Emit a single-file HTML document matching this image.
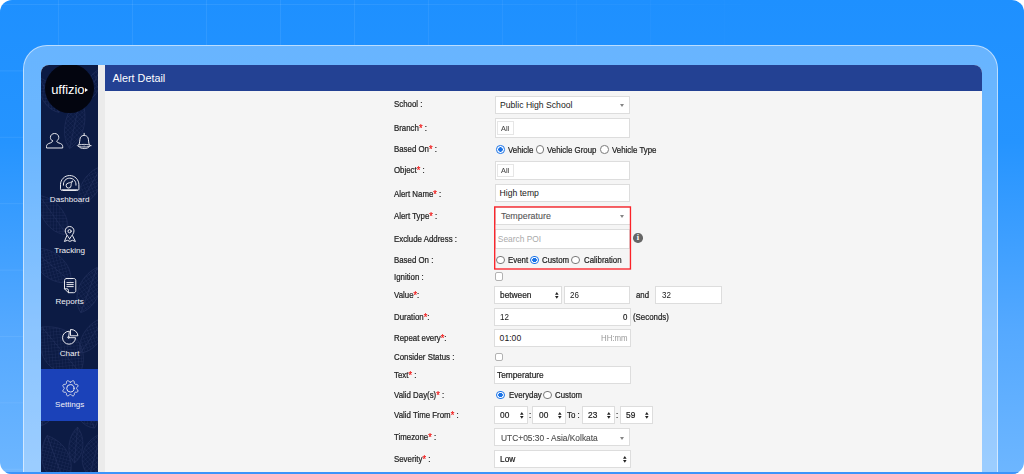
<!DOCTYPE html>
<html lang="en">
<head>
<meta charset="utf-8">
<title>Alert Detail</title>
<style>
*{box-sizing:border-box;margin:0;padding:0}
html,body{width:1024px;height:474px;overflow:hidden;background:#fff;font-family:"Liberation Sans",sans-serif}
#stage{position:absolute;left:0;top:0;width:1024px;height:474px;border-radius:12px;overflow:hidden;
 background:linear-gradient(180deg,#1e90ff 0%,#2594ff 30%,#55a9ff 70%,#6db6ff 100%)}
#grid{position:absolute;inset:0;
 background-image:linear-gradient(90deg,rgba(255,255,255,.075) 1px,transparent 1px),linear-gradient(180deg,rgba(255,255,255,.075) 1px,transparent 1px);
 background-size:74px 66.4px;background-position:58px 4px;-webkit-mask-image:linear-gradient(90deg,#000 0%,#000 35%,transparent 78%);mask-image:linear-gradient(90deg,#000 0%,#000 35%,transparent 78%)}
#bot{position:absolute;left:0;top:472px;width:1024px;height:2px;background:#3b94fb}
#frame{position:absolute;left:23.3px;top:44.6px;width:975.2px;height:460px;border-radius:24px;background:linear-gradient(rgba(255,255,255,.32),rgba(255,255,255,.32)),linear-gradient(180deg,#1e90ff 0%,#2594ff 30%,#55a9ff 70%,#6db6ff 100%) 0 0/1024px 474px fixed;border:1px solid rgba(255,255,255,.55)}
#app{position:absolute;left:41px;top:65px;width:940.5px;height:407px;border-radius:8px 8px 0 0;overflow:hidden;background:#f5f5f5}
#side{position:absolute;left:0;top:0;width:57.3px;height:407px;background:#0c1b44;overflow:hidden}
#strip{position:absolute;left:57.3px;top:0;width:6.7px;height:407px;background:#ebebeb}
#hdr{position:absolute;left:64px;top:0;right:0;height:25.8px;background:#234193}
#hdr span{position:absolute;left:7.4px;top:7px;font-size:10.8px;line-height:13px;color:#fff;white-space:nowrap}
.abs{position:absolute}
.t{position:absolute;white-space:nowrap;line-height:12px;height:12px;font-size:8.6px;transform:scaleX(.915);transform-origin:0 50%;color:#222;-webkit-text-stroke:.22px currentColor}
.lab{left:394px}
.lab i{color:#f01818;font-style:normal;font-size:10px;line-height:8px;vertical-align:-1.2px}
.box{position:absolute;background:#fff;border:1px solid #ddd}
.nav{position:absolute;left:0;width:57.3px;text-align:center;color:#f1f1f6;font-size:8.1px;line-height:10px;white-space:nowrap;margin-top:.6px}
#logo{position:absolute;left:4px;top:-.6px;width:48.8px;height:48.8px;border-radius:50%;background:#03050f}
#logo span{position:absolute;left:6.2px;top:17.8px;font-size:13px;line-height:15px;color:#fff;letter-spacing:-.07px}
#logo b{position:absolute;left:40.1px;top:24px;width:0;height:0;border-top:2.2px solid transparent;border-bottom:2.2px solid transparent;border-left:3.9px solid #fff}
#active{position:absolute;left:0;top:304px;width:57.3px;height:51.7px;background:#1b42b9}
svg{position:absolute;overflow:visible}
.ic{fill:none;stroke:#e9e9ee;stroke-width:1;stroke-linejoin:round;stroke-linecap:round}
.ar9{font-size:8.65px;color:#1a1a1a;transform:none;-webkit-text-stroke:0}
.g{color:#484848;font-size:8px;margin-top:.5px;-webkit-text-stroke:.08px}
.g2{color:#555;font-size:8.9px;transform:none;-webkit-text-stroke:.1px}
.v{font-size:9.1px}
.tz{transform:scaleX(.945);color:#4c4c4c}
.d{transform:scaleX(.93)}
.ph{color:#aaa;font-size:8.4px;transform:none;-webkit-text-stroke:0}
.ph2{color:#999;font-size:8.6px;-webkit-text-stroke:0}
.tag{border-color:#e6e6e6;background:#fff}
.rd{position:absolute;width:8.6px;height:8.6px;border-radius:50%;border:.85px solid #7a7a7a;background:#fff}
.rd.on{border:1.1px solid #1a73e8;background:radial-gradient(circle,#1a73e8 0 2px,#fff 2.5px)}
.ck{position:absolute;width:8px;height:8.2px;border-radius:2px;border:1px solid #b2b2b2;background:#fff}
.ar{position:absolute;width:0;height:0;border-left:2.5px solid transparent;border-right:2.5px solid transparent;border-top:3.4px solid #858585;margin:-.2px 0 0 -.3px}
.ud{position:absolute;width:3.6px;height:6.8px;fill:#222}
.info{position:absolute;width:9.5px;height:9.5px;border-radius:50%;background:#666;color:#fff;font-family:"Liberation Serif",serif;font-weight:bold;font-size:8.4px;line-height:9.5px;text-align:center}
.red{position:absolute;border:1.35px solid #fb2026}

</style>
</head>
<body>
<div id="stage">
 <div id="grid"></div>
 <div id="frame"></div>
 <div id="app">
  <div id="side">
<svg id="leaf" width="57.3" height="407" viewBox="0 0 57.3 407" style="left:0;top:0;opacity:.2;overflow:hidden"><defs><pattern id="hx" width="3.2" height="3.2" patternUnits="userSpaceOnUse" patternTransform="rotate(35)"><path d="M0 0H3.2M0 0V3.2" stroke="#8e96d6" stroke-width=".55" fill="none"/></pattern></defs><g transform="translate(34 58) rotate(12)"><path d="M0 -26C13.2 -10.4 12.100000000000001 15.6 0 26C-12.100000000000001 15.6 -13.2 -10.4 0 -26Z" fill="url(#hx)" stroke="#8e96d6" stroke-width=".5"/><path d="M0 -26V26" stroke="#8e96d6" stroke-width=".5"/></g><g transform="translate(8 30) rotate(-30)"><path d="M0 -20C10.799999999999999 -8.0 9.9 12.0 0 20C-9.9 12.0 -10.799999999999999 -8.0 0 -20Z" fill="url(#hx)" stroke="#8e96d6" stroke-width=".5"/><path d="M0 -20V20" stroke="#8e96d6" stroke-width=".5"/></g><g transform="translate(52 20) rotate(25)"><path d="M0 -18C9.6 -7.2 8.8 10.799999999999999 0 18C-8.8 10.799999999999999 -9.6 -7.2 0 -18Z" fill="url(#hx)" stroke="#8e96d6" stroke-width=".5"/><path d="M0 -18V18" stroke="#8e96d6" stroke-width=".5"/></g><g transform="translate(12 150) rotate(-35)"><path d="M0 -24C14.399999999999999 -9.600000000000001 13.200000000000001 14.399999999999999 0 24C-13.200000000000001 14.399999999999999 -14.399999999999999 -9.600000000000001 0 -24Z" fill="url(#hx)" stroke="#8e96d6" stroke-width=".5"/><path d="M0 -24V24" stroke="#8e96d6" stroke-width=".5"/></g><g transform="translate(50 120) rotate(30)"><path d="M0 -22C12.0 -8.8 11.0 13.2 0 22C-11.0 13.2 -12.0 -8.8 0 -22Z" fill="url(#hx)" stroke="#8e96d6" stroke-width=".5"/><path d="M0 -22V22" stroke="#8e96d6" stroke-width=".5"/></g><g transform="translate(10 200) rotate(-50)"><path d="M0 -26C16.8 -10.4 15.400000000000002 15.6 0 26C-15.400000000000002 15.6 -16.8 -10.4 0 -26Z" fill="url(#hx)" stroke="#8e96d6" stroke-width=".5"/><path d="M0 -26V26" stroke="#8e96d6" stroke-width=".5"/></g><g transform="translate(48 225) rotate(20)"><path d="M0 -24C14.399999999999999 -9.600000000000001 13.200000000000001 14.399999999999999 0 24C-13.200000000000001 14.399999999999999 -14.399999999999999 -9.600000000000001 0 -24Z" fill="url(#hx)" stroke="#8e96d6" stroke-width=".5"/><path d="M0 -24V24" stroke="#8e96d6" stroke-width=".5"/></g><g transform="translate(20 285) rotate(-40)"><path d="M0 -30C26.4 -12.0 24.200000000000003 18.0 0 30C-24.200000000000003 18.0 -26.4 -12.0 0 -30Z" fill="url(#hx)" stroke="#8e96d6" stroke-width=".5"/><path d="M0 -30V30" stroke="#8e96d6" stroke-width=".5"/></g><g transform="translate(52 270) rotate(35)"><path d="M0 -22C12.0 -8.8 11.0 13.2 0 22C-11.0 13.2 -12.0 -8.8 0 -22Z" fill="url(#hx)" stroke="#8e96d6" stroke-width=".5"/><path d="M0 -22V22" stroke="#8e96d6" stroke-width=".5"/></g><g transform="translate(8 340) rotate(20)"><path d="M0 -22C12.0 -8.8 11.0 13.2 0 22C-11.0 13.2 -12.0 -8.8 0 -22Z" fill="url(#hx)" stroke="#8e96d6" stroke-width=".5"/><path d="M0 -22V22" stroke="#8e96d6" stroke-width=".5"/></g><g transform="translate(45 345) rotate(-25)"><path d="M0 -20C14.399999999999999 -8.0 13.200000000000001 12.0 0 20C-13.200000000000001 12.0 -14.399999999999999 -8.0 0 -20Z" fill="url(#hx)" stroke="#8e96d6" stroke-width=".5"/><path d="M0 -20V20" stroke="#8e96d6" stroke-width=".5"/></g><g transform="translate(15 395) rotate(-20)"><path d="M0 -26C19.2 -10.4 17.6 15.6 0 26C-17.6 15.6 -19.2 -10.4 0 -26Z" fill="url(#hx)" stroke="#8e96d6" stroke-width=".5"/><path d="M0 -26V26" stroke="#8e96d6" stroke-width=".5"/></g><g transform="translate(54 390) rotate(15)"><path d="M0 -22C16.8 -8.8 15.400000000000002 13.2 0 22C-15.400000000000002 13.2 -16.8 -8.8 0 -22Z" fill="url(#hx)" stroke="#8e96d6" stroke-width=".5"/><path d="M0 -22V22" stroke="#8e96d6" stroke-width=".5"/></g><g transform="translate(35 380) rotate(5)"><path d="M0 -18C9.6 -7.2 8.8 10.799999999999999 0 18C-8.8 10.799999999999999 -9.6 -7.2 0 -18Z" fill="url(#hx)" stroke="#8e96d6" stroke-width=".5"/><path d="M0 -18V18" stroke="#8e96d6" stroke-width=".5"/></g></svg>
   <div id="active"></div>
   <div id="logo"><span>uffizio</span><b></b></div>
<!--icons-->
   <svg class="ic" style="left:4.8px;top:68.3px" width="17.2" height="15.6" viewBox="0 0 17.2 15.6" ><path d="M6.4 7.9C5.2 7.1 4.4 5.9 4.4 4.5C4.4 2.1 6.2.5 8.6.5C11 .5 12.8 2.1 12.8 4.5C12.8 5.9 12 7.1 10.8 7.9C10.8 9.2 11.6 9.6 13 10C15.4 10.7 16.7 11.6 16.7 13.6L16.7 15L.5 15L.5 13.6C.5 11.6 1.8 10.7 4.2 10C5.6 9.6 6.4 9.2 6.4 7.9Z"/></svg>
   <svg class="ic" style="left:35.7px;top:68.0px" width="14.4" height="16.4" viewBox="0 0 14.4 16.4" ><path d="M7.15.3V2.4M2 11.8C2.9 9.5 2.6 6.5 3.3 4.8C4 3.2 5.5 2.4 7.15 2.4C8.8 2.4 10.3 3.2 11 4.8C11.7 6.5 11.4 9.5 12.3 11.8"/><ellipse cx="7.15" cy="12.7" rx="6.8" ry="1.3" stroke-width=".9"/><path d="M2 13.8C3.3 16.3 11 16.3 12.3 13.8" stroke-width=".9"/><circle cx="7.15" cy="13.1" r=".5" fill="#e9e9ee" stroke="none"/></svg>
   <svg class="ic" style="left:19.0px;top:109.9px" width="19.4" height="16" viewBox="0 0 19.4 16" ><path d="M2.2 15.5C1 15.5 .5 14.8 .5 13.8L.5 9.7C.5 4.6 4.6.5 9.7.5C14.8.5 18.9 4.6 18.9 9.7L18.9 13.8C18.9 14.8 18.4 15.5 17.2 15.5Z"/><path d="M3.4 10.2C3.1 6 6 3.2 9.7 3.2C13.4 3.2 16.3 6 16 10.2"/><path d="M2 14.6H17.4" stroke-width=".8"/><path d="M12.5 6.2C11.3 7.8 11.1 9.1 11.1 10.6A2.5 2.5 0 1 1 8.2 8.1C9.6 7.8 11.2 7.3 12.5 6.2Z"/></svg>
   <svg class="ic" style="left:22.8px;top:161.0px" width="11.8" height="16" viewBox="0 0 11.8 16" ><path d="M5.6 12.8C3.5 9.5 1.2 7.5 1.2 4.9C1.2 2.4 3.2.5 5.6.5C8 .5 10 2.4 10 4.9C10 7.5 7.7 9.5 5.6 12.8Z"/><circle cx="5.6" cy="5.2" r="1.6"/><path d="M2.9 9.6L.4 15.5L3.4 14.3L5.9 15.4L8.4 14.3L11.4 15.5L8.5 9.6"/></svg>
   <svg class="ic" style="left:22.5px;top:212.8px" width="12.4" height="15.4" viewBox="0 0 12.4 15.4" ><path d="M2.6.5L9.7.5C11 .5 11.8 1.3 11.8 2.6L11.8 12.6C11.8 13.9 11 14.7 9.7 14.7L4.4 14.7L.5 10.8L.5 2.6C.5 1.3 1.3.5 2.6.5Z"/><path d="M.5 10.8L3 10.8C3.9 10.8 4.4 11.3 4.4 12.2L4.4 14.7"/><path d="M2.9 4.6H9.3M2.9 6.6H9.3M2.9 8.6H9.3"/></svg>
   <svg class="ic" style="left:20.6px;top:263.7px" width="16.6" height="16.2" viewBox="0 0 16.6 16.2" ><path d="M7 2.2A6.5 6.5 0 1 0 13.5 8.7L7 8.7Z"/><path d="M8.9.5A6.6 6.6 0 0 1 15.9 6.8L8.9 6.8Z"/><circle cx="6.6" cy="8.4" r=".9"/></svg>
   <svg class="ic" style="left:20.5px;top:314.7px" width="17" height="17" viewBox="0 0 17 17" ><path d="M8.40 2.15 L8.64 2.13 L8.89 2.06 L9.15 1.94 L9.44 1.75 L9.79 1.34 L10.17 0.94 L10.51 0.80 L10.85 0.75 L11.18 0.77 L11.48 0.86 L11.76 1.02 L12.00 1.23 L12.21 1.50 L12.36 1.85 L12.34 2.40 L12.30 2.94 L12.37 3.27 L12.47 3.54 L12.59 3.76 L12.75 3.95 L12.94 4.11 L13.16 4.23 L13.43 4.33 L13.76 4.40 L14.30 4.36 L14.85 4.34 L15.20 4.49 L15.47 4.70 L15.68 4.94 L15.84 5.22 L15.93 5.52 L15.95 5.85 L15.90 6.19 L15.76 6.53 L15.36 6.91 L14.95 7.26 L14.76 7.55 L14.64 7.81 L14.57 8.06 L14.55 8.30 L14.57 8.54 L14.64 8.79 L14.76 9.05 L14.95 9.34 L15.36 9.69 L15.76 10.07 L15.90 10.41 L15.95 10.75 L15.93 11.08 L15.84 11.38 L15.68 11.66 L15.47 11.90 L15.20 12.11 L14.85 12.26 L14.30 12.24 L13.76 12.20 L13.43 12.27 L13.16 12.37 L12.94 12.49 L12.75 12.65 L12.59 12.84 L12.47 13.06 L12.37 13.33 L12.30 13.66 L12.34 14.20 L12.36 14.75 L12.21 15.10 L12.00 15.37 L11.76 15.58 L11.48 15.74 L11.18 15.83 L10.85 15.85 L10.51 15.80 L10.17 15.66 L9.79 15.26 L9.44 14.85 L9.15 14.66 L8.89 14.54 L8.64 14.47 L8.40 14.45 L8.16 14.47 L7.91 14.54 L7.65 14.66 L7.36 14.85 L7.01 15.26 L6.63 15.66 L6.29 15.80 L5.95 15.85 L5.62 15.83 L5.32 15.74 L5.04 15.58 L4.80 15.37 L4.59 15.10 L4.44 14.75 L4.46 14.20 L4.50 13.66 L4.43 13.33 L4.33 13.06 L4.21 12.84 L4.05 12.65 L3.86 12.49 L3.64 12.37 L3.37 12.27 L3.04 12.20 L2.50 12.24 L1.95 12.26 L1.60 12.11 L1.33 11.90 L1.12 11.66 L0.96 11.38 L0.87 11.08 L0.85 10.75 L0.90 10.41 L1.04 10.07 L1.44 9.69 L1.85 9.34 L2.04 9.05 L2.16 8.79 L2.23 8.54 L2.25 8.30 L2.23 8.06 L2.16 7.81 L2.04 7.55 L1.85 7.26 L1.44 6.91 L1.04 6.53 L0.90 6.19 L0.85 5.85 L0.87 5.52 L0.96 5.22 L1.12 4.94 L1.33 4.70 L1.60 4.49 L1.95 4.34 L2.50 4.36 L3.04 4.40 L3.37 4.33 L3.64 4.23 L3.86 4.11 L4.05 3.95 L4.21 3.76 L4.33 3.54 L4.43 3.27 L4.50 2.94 L4.46 2.40 L4.44 1.85 L4.59 1.50 L4.80 1.23 L5.04 1.02 L5.32 0.86 L5.62 0.77 L5.95 0.75 L6.29 0.80 L6.63 0.94 L7.01 1.34 L7.36 1.75 L7.65 1.94 L7.91 2.06 L8.16 2.13Z"/><circle cx="8.4" cy="8.3" r="3.7"/></svg>
<!--/icons-->   <div class="nav" style="top:129.1px">Dashboard</div>
   <div class="nav" style="top:180.1px">Tracking</div>
   <div class="nav" style="top:231.6px">Reports</div>
   <div class="nav" style="top:283.2px">Chart</div>
   <div class="nav" style="top:334.5px">Settings</div>
  </div>
  <div id="strip"></div>
  <div id="hdr"><span>Alert Detail</span></div>
 </div>
 <div id="bot"></div>
 <div id="form">
  <div class="t lab" style="top:98.4px">School :</div>
  <div class="box " style="left:495px;top:96.4px;width:134.8px;height:17.2px"></div>
  <div class="t ar9" style="left:500px;top:98.6px;">Public High School</div>
  <div class="ar" style="left:620.6px;top:104.3px"></div>
  <div class="t lab" style="top:122.4px">Branch<i>*</i> :</div>
  <div class="box " style="left:495px;top:118.4px;width:134.8px;height:19.5px"></div>
  <div class="box tag" style="left:497.3px;top:121.3px;width:16.4px;height:13.5px"></div>
  <div class="t g" style="left:501.4px;top:122.2px;">All</div>
  <div class="t lab" style="top:143.3px">Based On<i>*</i> :</div>
  <div class="rd on" style="left:496.3px;top:145.2px"></div>
  <div class="t " style="left:508.3px;top:143.5px;">Vehicle</div>
  <div class="rd" style="left:535.5px;top:145.2px"></div>
  <div class="t " style="left:547.2px;top:143.5px;">Vehicle Group</div>
  <div class="rd" style="left:600.0px;top:145.2px"></div>
  <div class="t " style="left:611.5px;top:143.5px;">Vehicle Type</div>
  <div class="t lab" style="top:164.3px">Object<i>*</i> :</div>
  <div class="box " style="left:495px;top:161px;width:134.8px;height:19.4px"></div>
  <div class="box tag" style="left:497.3px;top:163.9px;width:16.4px;height:13.5px"></div>
  <div class="t g" style="left:501.4px;top:164.8px;">All</div>
  <div class="t lab" style="top:187.5px">Alert Name<i>*</i> :</div>
  <div class="box " style="left:495px;top:184.4px;width:135.3px;height:17.6px"></div>
  <div class="t ar9" style="left:499.6px;top:187.3px;">High temp</div>
  <div class="t lab" style="top:209.6px">Alert Type<i>*</i> :</div>
  <div class="box " style="left:494.5px;top:207px;width:136.1px;height:17.5px"></div>
  <div class="t g2" style="left:501px;top:209.8px;">Temperature</div>
  <div class="ar" style="left:620.6px;top:215.3px"></div>
  <div class="t lab" style="top:232.6px">Exclude Address :</div>
  <div class="box " style="left:495.2px;top:229.3px;width:134.6px;height:19.6px"></div>
  <div class="t ph" style="left:497.8px;top:232.8px;">Search POI</div>
  <div class="info" style="left:633.1px;top:233.3px">i</div>
  <div class="t lab" style="top:254.0px">Based On :</div>
  <div class="rd" style="left:496.4px;top:255.7px"></div>
  <div class="t " style="left:508.3px;top:254.0px;">Event</div>
  <div class="rd on" style="left:530.1px;top:255.7px"></div>
  <div class="t " style="left:542px;top:254.0px;">Custom</div>
  <div class="rd" style="left:571.4px;top:255.7px"></div>
  <div class="t " style="left:583.6px;top:254.0px;">Calibration</div>
  <svg class="redr" style="left:0;top:0" width="1024" height="474"><rect x="494.7" y="206.95" width="135.75" height="62.05" fill="none" stroke="#fb2228" stroke-width="1.35"/></svg>
  <div class="t lab" style="top:270.6px">Ignition :</div>
  <div class="ck" style="left:495px;top:272.4px"></div>
  <div class="t lab" style="top:288.9px">Value<i>*</i>:</div>
  <div class="box " style="left:494px;top:286px;width:68.2px;height:17.7px"></div>
  <div class="t v" style="left:500.3px;top:289.0px;">between</div>
  <svg class="ud" style="left:554.8px;top:291.7px" viewBox="0 0 36 68"><path d="M18 0L36 27H0ZM18 68L0 41H36Z"/></svg>
  <div class="box " style="left:563.9px;top:286px;width:66.4px;height:17.7px"></div>
  <div class="t ar9 d" style="left:570px;top:289.0px;">26</div>
  <div class="t " style="left:636px;top:289.0px;">and</div>
  <div class="box " style="left:655.3px;top:286px;width:66.5px;height:17.7px"></div>
  <div class="t ar9 d" style="left:661.5px;top:289.0px;">32</div>
  <div class="t lab" style="top:310.5px">Duration<i>*</i>:</div>
  <div class="box " style="left:494px;top:308.2px;width:136.5px;height:17.8px"></div>
  <div class="t ar9 d" style="left:499.6px;top:310.6px;">12</div>
  <div class="t " style="left:623.3px;top:310.6px;">0</div>
  <div class="t " style="left:632.5px;top:310.6px;">(Seconds)</div>
  <div class="t lab" style="top:332.1px">Repeat every<i>*</i>:</div>
  <div class="box " style="left:494px;top:329.3px;width:136.5px;height:17.3px"></div>
  <div class="t ar9" style="left:499.6px;top:331.6px;">01:00</div>
  <div class="t ph2" style="left:600.5px;top:332.2px;">HH:mm</div>
  <div class="t lab" style="top:350.6px">Consider Status :</div>
  <div class="ck" style="left:495px;top:352.6px"></div>
  <div class="t lab" style="top:368.9px">Text<i>*</i> :</div>
  <div class="box " style="left:494px;top:366.3px;width:136.5px;height:17.9px"></div>
  <div class="t v" style="left:497.1px;top:369.0px;">Temperature</div>
  <div class="t lab" style="top:389.1px">Valid Day(s)<i>*</i> :</div>
  <div class="rd on" style="left:496.0px;top:390.9px"></div>
  <div class="t " style="left:508.7px;top:389.1px;">Everyday</div>
  <div class="rd" style="left:543.1px;top:390.9px"></div>
  <div class="t " style="left:554.8px;top:389.1px;">Custom</div>
  <div class="t lab" style="top:408.8px">Valid Time From<i>*</i> :</div>
  <div class="box " style="left:494px;top:406.3px;width:33.7px;height:17.3px"></div>
  <div class="t v" style="left:500.2px;top:409.0px;">00</div>
  <svg class="ud" style="left:519.9px;top:411.6px" viewBox="0 0 36 68"><path d="M18 0L36 27H0ZM18 68L0 41H36Z"/></svg>
  <div class="box " style="left:532.3px;top:406.3px;width:33.4px;height:17.3px"></div>
  <div class="t v" style="left:538.5px;top:409.0px;">00</div>
  <svg class="ud" style="left:557.9px;top:411.6px" viewBox="0 0 36 68"><path d="M18 0L36 27H0ZM18 68L0 41H36Z"/></svg>
  <div class="box " style="left:581.5px;top:406.3px;width:33.4px;height:17.3px"></div>
  <div class="t v" style="left:587.7px;top:409.0px;">23</div>
  <svg class="ud" style="left:607.1px;top:411.6px" viewBox="0 0 36 68"><path d="M18 0L36 27H0ZM18 68L0 41H36Z"/></svg>
  <div class="box " style="left:619.5px;top:406.3px;width:33.0px;height:17.3px"></div>
  <div class="t v" style="left:625.7px;top:409.0px;">59</div>
  <svg class="ud" style="left:644.7px;top:411.6px" viewBox="0 0 36 68"><path d="M18 0L36 27H0ZM18 68L0 41H36Z"/></svg>
  <div class="t " style="left:529.3px;top:408.6px;">:</div>
  <div class="t " style="left:567.4px;top:408.8px;">To :</div>
  <div class="t " style="left:616.4px;top:408.6px;">:</div>
  <div class="t lab" style="top:431.3px">Timezone<i>*</i> :</div>
  <div class="box " style="left:494px;top:428px;width:136.2px;height:18.0px"></div>
  <div class="t g2 tz" style="left:500.6px;top:431.9px;">UTC+05:30 - Asia/Kolkata</div>
  <div class="ar" style="left:620.6px;top:436.9px"></div>
  <div class="t lab" style="top:452.7px">Severity<i>*</i> :</div>
  <div class="box " style="left:494px;top:450.4px;width:136.5px;height:17.6px"></div>
  <div class="t v" style="left:500.3px;top:452.9px;">Low</div>
  <svg class="ud" style="left:622.5px;top:455.6px" viewBox="0 0 36 68"><path d="M18 0L36 27H0ZM18 68L0 41H36Z"/></svg>
 </div><!--/form-->
</div>
</body>
</html>
